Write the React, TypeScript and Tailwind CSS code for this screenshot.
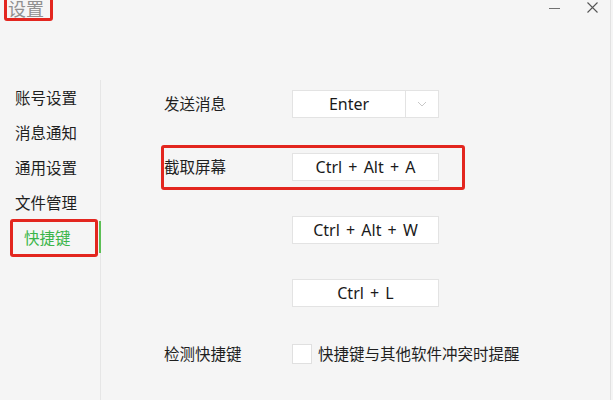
import React from "react";

const cjk = { fontFamily: '"Noto Sans CJK SC", "Noto Sans", sans-serif' };
const latin = { fontFamily: '"Noto Sans", "Noto Sans CJK SC", sans-serif' };

function KeyBox({ text, dropdown }: { text: string; dropdown?: boolean }) {
  return (
    <div className="flex h-[28px] w-[147px] border border-[#e3e3e3] bg-white">
      <div
        className="flex flex-1 items-center justify-center text-[16px] text-[#1a1a1a] [word-spacing:2px]"
        style={latin}
      >
        {text}
      </div>
      {dropdown && (
        <div className="flex w-[33px] items-center justify-center border-l border-[#e3e3e3]">
          <svg width="10" height="6" viewBox="0 0 10 6" fill="none">
            <path d="M1 1l4 4 4-4" stroke="#c8c8c8" strokeWidth="1" />
          </svg>
        </div>
      )}
    </div>
  );
}

export default function App() {
  const menu = ["账号设置", "消息通知", "通用设置", "文件管理"];
  return (
    <div className="relative h-[400px] w-[613px] overflow-hidden bg-[#f5f5f5]" style={cjk}>
      {/* title bar */}
      <div className="flex h-[80px] items-start">
        <div className="ml-[8px] mt-[-6px] text-[18px] leading-[28px] text-[#909090]">设置</div>
        <div className="ml-auto mr-[15px] mt-[2px] flex items-center gap-[27px]">
          <div className="h-[10px] w-[11px] border-b border-[#707070] -translate-y-[4px]" />
          <svg width="11" height="11" viewBox="0 0 11 11">
            <path d="M0.5 0.5l10 10M10.5 0.5l-10 10" stroke="#555" strokeWidth="1.1" />
          </svg>
        </div>
      </div>
      <div className="absolute right-[2px] top-0 h-full w-px bg-[#e2e2e2]" />

      <div className="flex">
        {/* sidebar */}
        <div className="relative h-[320px] w-[101px] border-r border-[#e6e6e6]">
          {menu.map((m) => (
            <div key={m} className="flex h-[35px] items-center pl-[15px] text-[15.5px] text-[#1f1f1f]">
              {m}
            </div>
          ))}
          <div className="relative flex h-[35px] items-center pl-[24px] text-[15.5px] text-[#3bb54a]">
            快捷键
            <div className="absolute right-[-1px] top-[1px] h-[32px] w-[2px] bg-[#5cbf55]" />
          </div>
        </div>

        {/* content */}
        <div className="flex flex-col pl-[63px] pt-[10px]">
          <div className="flex h-[28px] items-center">
            <div className="w-[128px] text-[15.5px] text-[#1f1f1f]">发送消息</div>
            <KeyBox text="Enter" dropdown />
          </div>
          <div className="mt-[35px] flex h-[28px] items-center">
            <div className="w-[128px] text-[15.5px] text-[#1f1f1f]">截取屏幕</div>
            <KeyBox text="Ctrl + Alt + A" />
          </div>
          <div className="mt-[35px] flex h-[28px] items-center">
            <div className="w-[128px]" />
            <KeyBox text="Ctrl + Alt + W" />
          </div>
          <div className="mt-[35px] flex h-[28px] items-center">
            <div className="w-[128px]" />
            <KeyBox text="Ctrl + L" />
          </div>
          <div className="mt-[33px] flex h-[28px] items-center">
            <div className="w-[128px] text-[15.5px] text-[#1f1f1f]">检测快捷键</div>
            <div className="h-[20px] w-[20px] border border-[#e0e0e0] bg-white" />
            <div className="ml-[6px] text-[15.5px] text-[#1f1f1f]">快捷键与其他软件冲突时提醒</div>
          </div>
        </div>
      </div>

      {/* red annotation boxes */}
      <div className="absolute left-[4px] top-[-6px] h-[27px] w-[49px] rounded-[3px] border-[3px] border-[#e3261f]" />
      <div className="absolute left-[10px] top-[219px] h-[38px] w-[88px] rounded-[3px] border-[3px] border-[#e3261f]" />
      <div className="absolute left-[161px] top-[145px] h-[45px] w-[304px] rounded-[3px] border-[3px] border-[#e3261f]" />
    </div>
  );
}
